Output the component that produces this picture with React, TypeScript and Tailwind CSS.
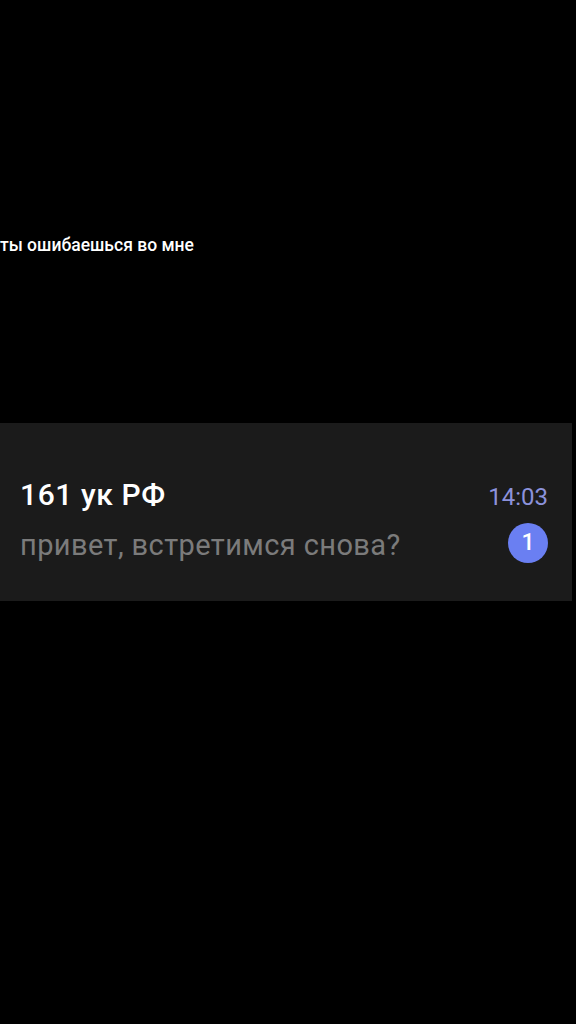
export default function App() {
  return (
    <div className="w-[576px] h-[1024px] bg-black flex flex-col font-['Roboto','Noto_Sans',sans-serif]">
      <div className="h-[234px]" />
      <p className="text-white text-[17.5px] font-medium leading-[22px]">ты ошибаешься во мне</p>
      <div className="h-[167px]" />
      {/* chat row */}
      <div className="w-[572px] h-[178px] bg-[#1b1b1b] flex flex-col pt-[54px] pl-5 pr-6 gap-3">
        <div className="flex items-baseline justify-between">
          <span className="text-white text-[30px] font-medium leading-[36px] tracking-[0.6px]">161 ук РФ</span>
          <span className="text-[#8c92dc] text-[24px] leading-[36px]">14:03</span>
        </div>
        <div className="flex items-center justify-between">
          <span className="text-[#7b7b7b] text-[29px] leading-[36px] tracking-[0.4px]">привет, встретимся снова?</span>
          <span className="w-10 h-10 -mt-[4px] rounded-full bg-[#6a7ff2] text-white text-[23px] font-medium flex items-center justify-center">1</span>
        </div>
      </div>
    </div>
  )
}
